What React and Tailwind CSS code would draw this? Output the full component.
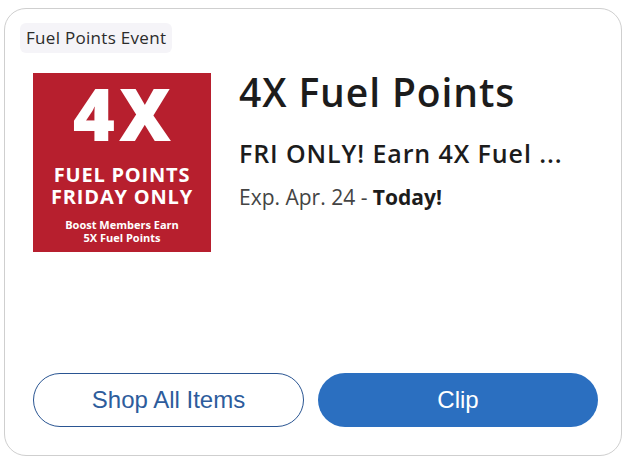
export default function App() {
    return (
        <div className="w-[630px] h-[465px] bg-white pt-[8px] pl-[4px]" style={{ fontFamily: '"Open Sans", "Noto Sans", sans-serif' }}>
            <div className="w-[618px] h-[448px] border border-[#cfcfcf] rounded-[22px] flex flex-col">

                {/* tag */}
                <div className="mt-[14px] ml-[15px]">
                    <span className="inline-block bg-[#f5f4f8] rounded-[6px] px-[6px] py-[5px] text-[17px] leading-[20px] tracking-[0.3px] text-[#2b2b2b]">
                        Fuel Points Event
                    </span>
                </div>

                {/* coupon body */}
                <div className="flex mt-[20px] ml-[28px] gap-[28px]">
                    <div className="w-[178px] h-[179px] bg-[#b71f2e] flex flex-col items-center text-white shrink-0">
                        <div className="text-[72px] leading-[70px] mt-[5px] font-extrabold tracking-[4px] pl-[4px]">4X</div>
                        <div className="text-[20px] leading-[22px] mt-[16px] font-bold tracking-[0.8px] text-center">
                            FUEL POINTS<br />FRIDAY ONLY
                        </div>
                        <div className="text-[11px] leading-[13px] mt-[10px] font-bold text-center">
                            Boost Members Earn<br />5X Fuel Points
                        </div>
                    </div>
                    <div className="flex flex-col">
                        <div className="text-[39px] leading-[38px] font-semibold tracking-[0.9px] text-[#1c1c1c]">4X Fuel Points</div>
                        <div className="text-[25px] leading-[30px] font-semibold tracking-[0.9px] text-[#1c1c1c] mt-[27px]">FRI ONLY! Earn 4X Fuel ...</div>
                        <div className="text-[21px] leading-[26px] text-[#444] mt-[16px]">
                            Exp. Apr. 24 - <span className="font-bold text-[#1c1c1c]">Today!</span>
                        </div>
                    </div>
                </div>

                {/* actions */}
                <div className="mt-auto mb-[28px] flex gap-[14px] pl-[28px] pr-[23px]" style={{ fontFamily: '"Liberation Sans", Arial, sans-serif' }}>
                    <button className="w-[271px] h-[54px] rounded-full border-[1.5px] border-[#2a5592] text-[#2d5c9c] text-[24px]">
                        Shop All Items
                    </button>
                    <button className="w-[280px] h-[54px] rounded-full bg-[#2b6fc0] text-white text-[24px]">
                        Clip
                    </button>
                </div>
            </div>
        </div>
    )
}
